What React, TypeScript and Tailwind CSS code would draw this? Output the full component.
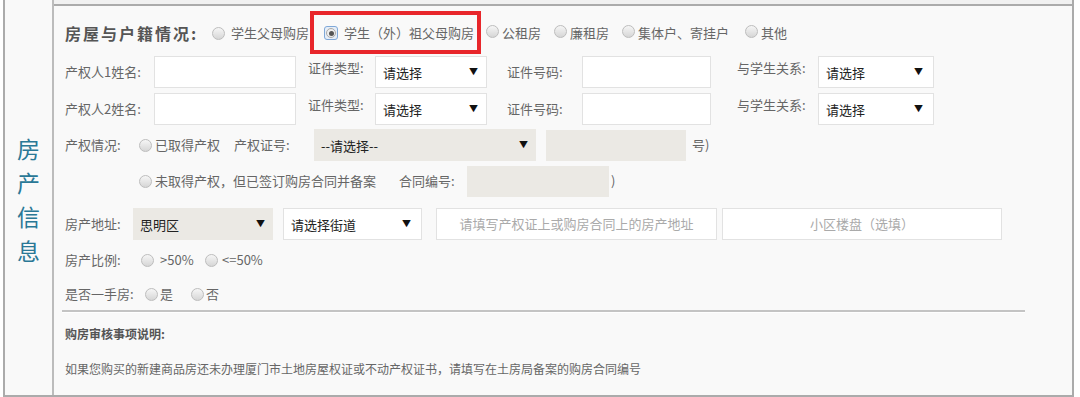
import React from 'react';

const font = { fontFamily: '"Microsoft YaHei", "Noto Sans CJK SC", "Noto Sans", sans-serif' };

function Radio({ checked = false }: { checked?: boolean }) {
  if (checked) {
    return (
      <span className="inline-flex h-[14px] w-[14px] shrink-0 items-center justify-center rounded-[3px] border border-[#7fa8d8] bg-[#e6eef8]">
        <span className="flex h-[10px] w-[10px] items-center justify-center rounded-full border border-[#aaa] bg-[#eee]">
          <span className="h-[5px] w-[5px] rounded-full bg-[#555]" />
        </span>
      </span>
    );
  }
  return (
    <span className="inline-block h-[13px] w-[13px] shrink-0 rounded-full border border-[#bdbdbd] bg-gradient-to-b from-[#f6f6f6] to-[#d6d6d6]" />
  );
}

function Select({ text, className, arrowRight = 'pr-[8px]' }: { text: string; className: string; arrowRight?: string }) {
  return (
    <div className={`flex h-[32px] items-center justify-between pl-[7px] ${arrowRight} text-[13px] text-[#222] ${className}`}>
      <span className="pt-[2px]">{text}</span>
      <span className="text-[9px] text-[#111]">▼</span>
    </div>
  );
}

function TextBox({ className, placeholder }: { className: string; placeholder?: string }) {
  return (
    <div className={`flex h-[32px] items-center justify-center border border-[#e2e2e2] bg-white text-[13px] text-[#aaa] ${className}`}>
      {placeholder}
    </div>
  );
}

export default function App() {
  return (
    <div className="h-[397px] w-[1080px] overflow-hidden bg-white" style={font}>
      <div className="ml-[3px] flex h-[397px] w-[1071px] border-b-2 border-l-2 border-r-2 border-[#ababab] bg-[#f9f9f9]">
        {/* left label column */}
        <div className="flex w-[49px] shrink-0 items-center justify-center border-r-2 border-[#bcbcbc] pt-[2px]">
          <div className="flex flex-col items-center text-[23px] leading-[34px] text-[#2a7896]">
            <span>房</span>
            <span>产</span>
            <span>信</span>
            <span>息</span>
          </div>
        </div>

        {/* right content */}
        <div className="flex-1">
          <div className="h-[4px] bg-[#f1f1f1]" />
          <div className="border-t-2 border-[#ababab] pl-[11px] pt-[7px] text-[13px] text-[#666]">
            {/* row 1 */}
            <div className="flex h-[40px] items-center">
              <span className="w-[147px] text-[16px] font-bold tracking-[2px] text-[#555]">房屋与户籍情况:</span>
              <Radio />
              <span className="ml-[6px] text-[#666]">学生父母购房</span>
              <span className="relative ml-[15px] inline-flex items-center">
                <Radio checked />
                <span className="ml-[6px] text-[#666]">学生（外）祖父母购房</span>
                <span className="absolute -left-[14px] -right-[7px] -top-[12px] -bottom-[11px] border-4 border-[#e8262b]" />
              </span>
              <span className="ml-[12px]"><Radio /></span>
              <span className="ml-[3px]">公租房</span>
              <span className="ml-[13px]"><Radio /></span>
              <span className="ml-[3px]">廉租房</span>
              <span className="ml-[13px]"><Radio /></span>
              <span className="ml-[3px]">集体户、寄挂户</span>
              <span className="ml-[16px]"><Radio /></span>
              <span className="ml-[3px]">其他</span>
            </div>

            {/* rows 2-3 */}
            {['产权人1姓名:', '产权人2姓名:'].map((label) => (
              <div key={label} className="flex h-[37px] items-center">
                <span className="w-[89px]">{label}</span>
                <TextBox className="w-[142px]" />
                <span className="ml-[12px] -mt-[8px] w-[67px]">证件类型:</span>
                <Select text="请选择" className="w-[112px] border border-[#e2e2e2] bg-white" />
                <span className="ml-[20px] w-[75px]">证件号码:</span>
                <TextBox className="w-[129px]" />
                <span className="ml-[26px] -mt-[8px] w-[81px]">与学生关系:</span>
                <Select text="请选择" className="w-[116px] border border-[#e2e2e2] bg-white" arrowRight="pr-[10px]" />
              </div>
            ))}

            {/* row 4 */}
            <div className="flex h-[36px] items-center">
              <span className="w-[74px]">产权情况:</span>
              <Radio />
              <span className="ml-[3px] w-[79px]">已取得产权</span>
              <span className="w-[80px]">产权证号:</span>
              <Select text="--请选择--" className="w-[222px] bg-[#ebe9e4]" />
              <div className="ml-[10px] h-[31px] w-[140px] bg-[#ebe9e4]" />
              <span className="ml-[6px]">号)</span>
            </div>

            {/* row 5 */}
            <div className="flex h-[36px] items-center">
              <span className="w-[74px]" />
              <Radio />
              <span className="ml-[3px] w-[244px]">未取得产权，但已签订购房合同并备案</span>
              <span className="w-[68px]">合同编号:</span>
              <div className="h-[31px] w-[142px] bg-[#ebe9e4]" />
              <span className="ml-[2px]">)</span>
            </div>

            {/* row 6 */}
            <div className="mt-[7px] flex h-[36px] items-center">
              <span className="w-[68px]">房产地址:</span>
              <Select text="思明区" className="w-[140px] bg-[#ebe9e4] pl-[5px]" arrowRight="pr-[8px]" />
              <Select text="请选择街道" className="ml-[10px] w-[139px] border border-[#e2e2e2] bg-white" arrowRight="pr-[10px]" />
              <TextBox className="ml-[14px] w-[281px]" placeholder="请填写产权证上或购房合同上的房产地址" />
              <TextBox className="ml-[5px] w-[280px]" placeholder="小区楼盘（选填）" />
            </div>

            {/* row 7 */}
            <div className="flex h-[36px] items-center">
              <span className="w-[76px]">房产比例:</span>
              <Radio />
              <span className="ml-[6px] w-[45px]">&gt;50%</span>
              <Radio />
              <span className="ml-[4px]">&lt;=50%</span>
            </div>

            {/* row 8 */}
            <div className="flex h-[32px] items-center">
              <span className="w-[80px]">是否一手房:</span>
              <Radio />
              <span className="ml-[2px] w-[31px]">是</span>
              <Radio />
              <span className="ml-[2px]">否</span>
            </div>

            {/* divider */}
            <div className="mr-[47px] -ml-[3px] border-t-2 border-[#c4c4c4]" />
            <div className="mr-[47px] -ml-[3px] h-px bg-white" />

            <div className="mt-[9px] h-[24px] text-[12px] font-bold leading-[24px] text-[#555]">购房审核事项说明:</div>
            <div className="mt-[11px] h-[24px] text-[12px] leading-[24px] text-[#666]">
              如果您购买的新建商品房还未办理厦门市土地房屋权证或不动产权证书，请填写在土房局备案的购房合同编号
            </div>
          </div>
        </div>
      </div>
    </div>
  );
}
